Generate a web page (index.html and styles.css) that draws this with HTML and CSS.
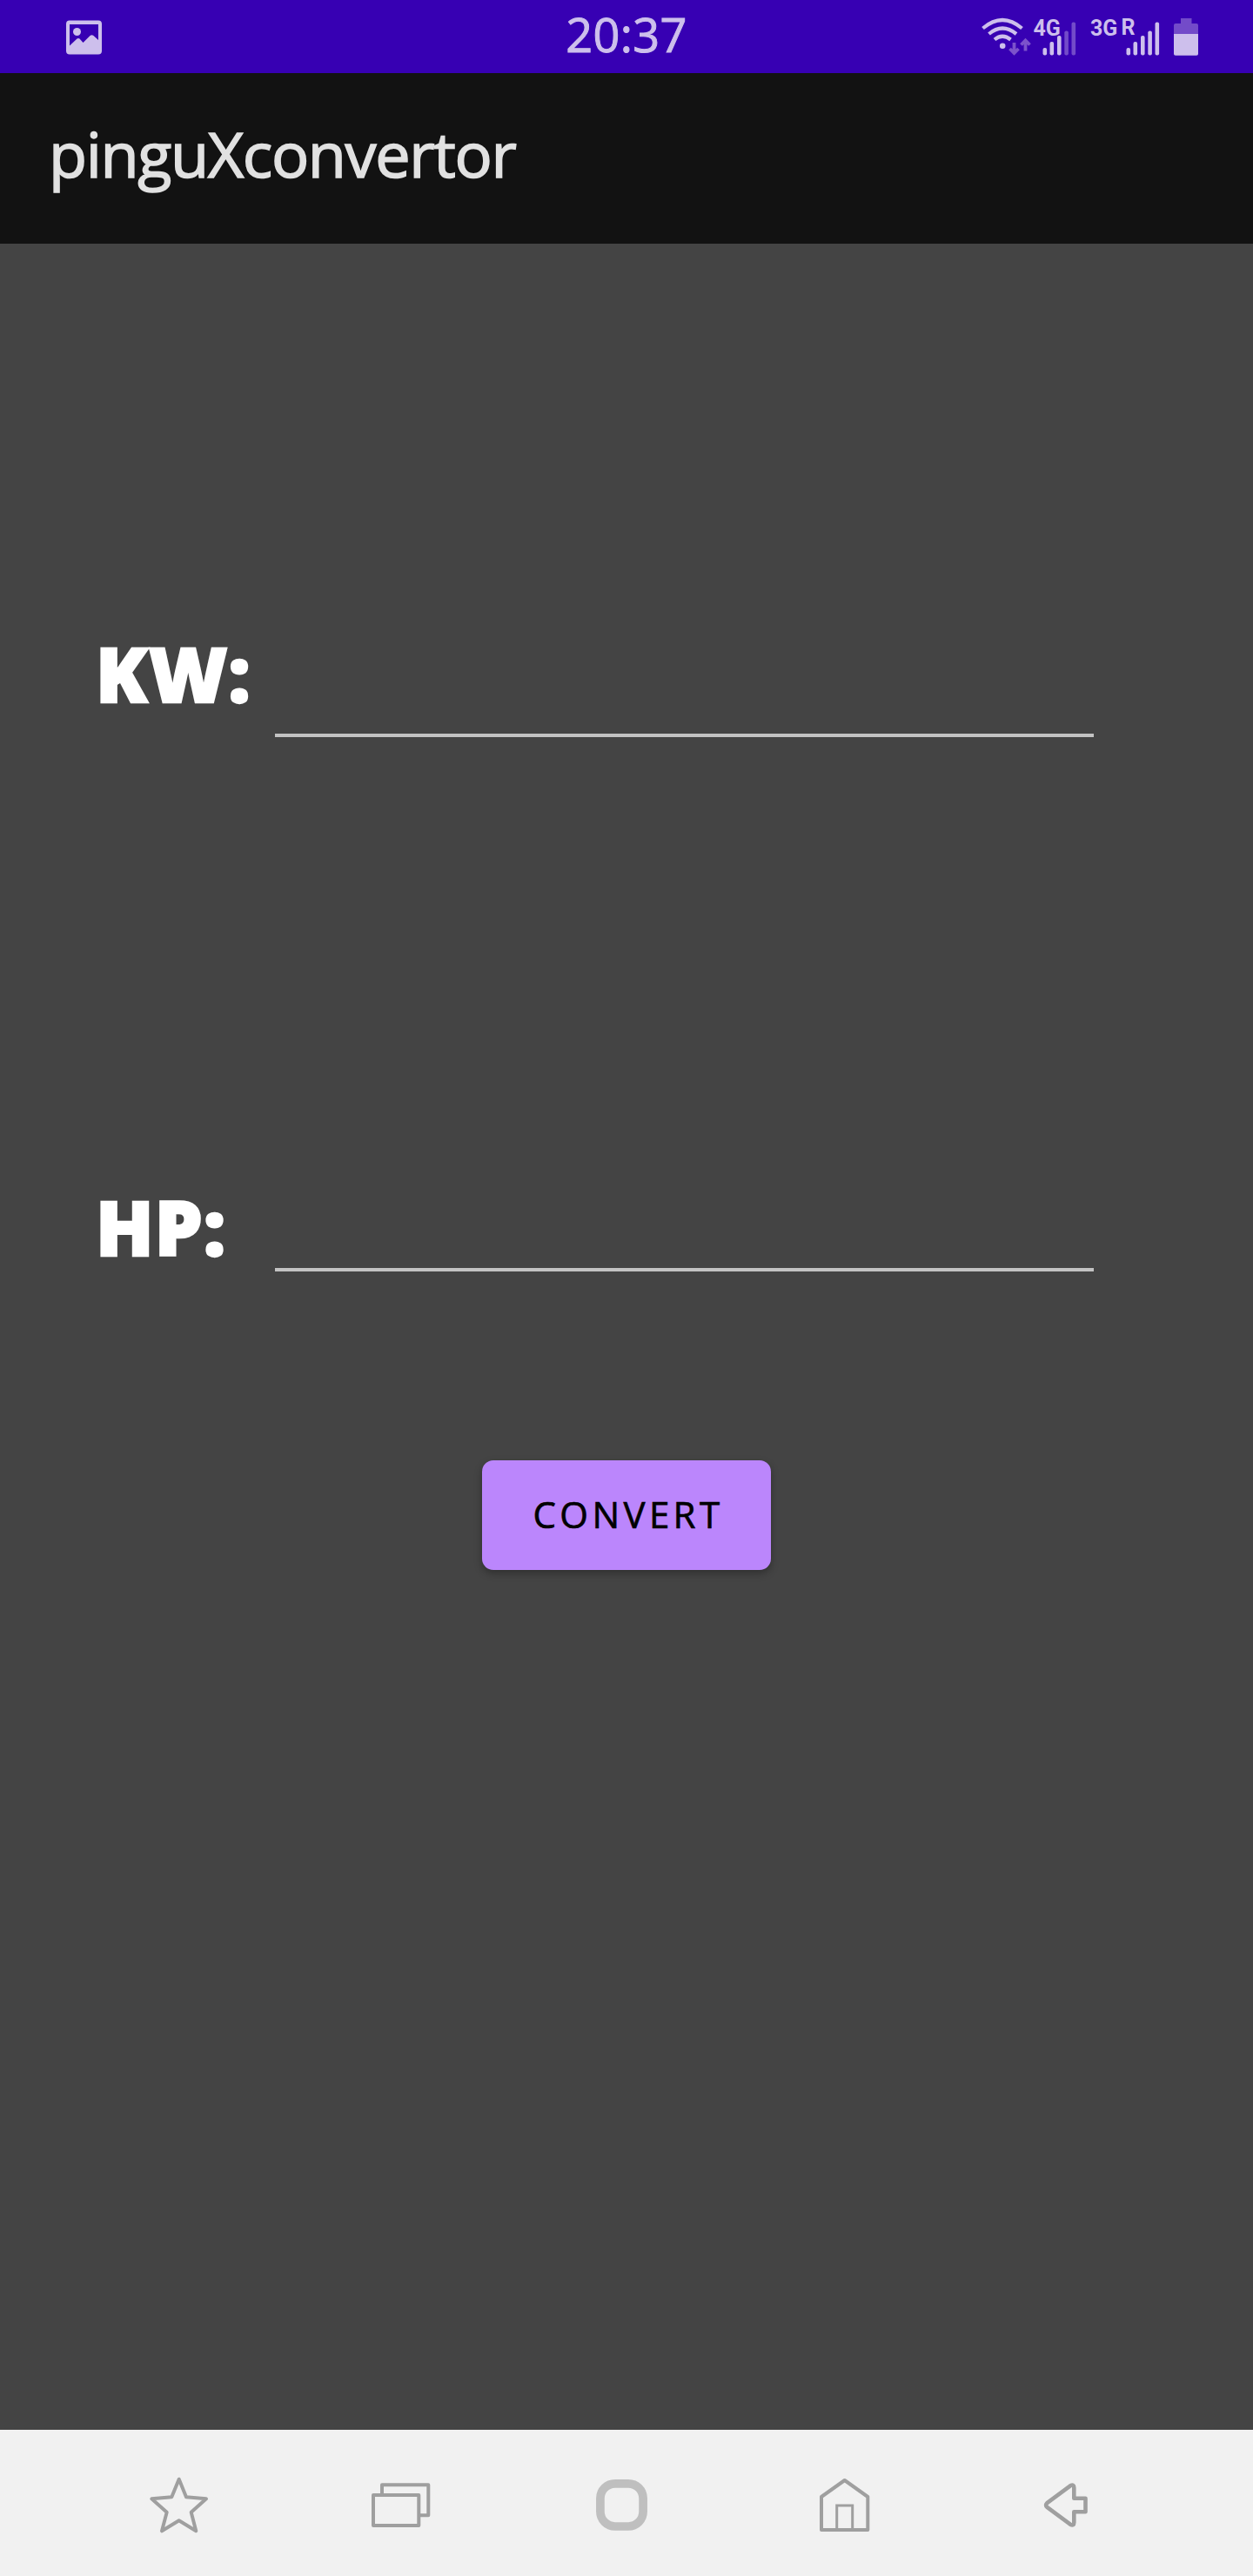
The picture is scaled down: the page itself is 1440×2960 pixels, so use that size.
FILE: index.html
```html
<!DOCTYPE html>
<html lang="en">
<head>
<meta charset="utf-8">
<title>pinguXconvertor</title>
<link rel="stylesheet" href="styles.css">
</head>
<body>
<div class="screen">
  <header class="status">
    <svg class="status-image" viewBox="0 0 42 40" aria-hidden="true">
      <path fill-rule="evenodd" d="M4 .5h33a4 4 0 0 1 4 4v31a4 4 0 0 1-4 4H4a4 4 0 0 1-4-4v-31a4 4 0 0 1 4-4zM4 5v24.500l8.500-8q1.500-1 3 0l4 4.500 8-8q2-1.600 4 0l5.500 5V5z"/>
      <circle cx="12.500" cy="13.500" r="4.500"/>
    </svg>
    <time class="clock">20:37</time>
    <svg class="status-signals" viewBox="0 0 330 84" aria-hidden="true">
      <g class="wave">
        <path d="M19.500 32.500Q42 13.500 64.500 32.500"/>
        <path d="M26.500 39Q42 26 58 39"/>
        <path d="M33 45.500Q42 38 51.500 45.500"/>
      </g>
      <circle cx="42.200" cy="52.700" r="3.300"/>
      <g class="traffic">
        <path d="M55.500 49v12M50.500 56l5 5 5-5"/>
        <path d="M68.500 58.500v-12M63.500 51.500l5-5 5 5"/>
      </g>
      <text x="77.500" y="41.300">4G</text>
      <g>
        <rect x="88.500" y="55" width="4.600" height="8.500" rx="2"/>
        <rect x="96.500" y="48" width="4.600" height="15.500" rx="2"/>
        <rect x="105" y="41" width="4.600" height="22.500" rx="2"/>
        <rect class="faint" x="113.300" y="35.500" width="4.600" height="28" rx="2"/>
        <rect class="faint" x="121.500" y="25.500" width="4.600" height="38" rx="2"/>
      </g>
      <text x="143" y="41.300">3G</text>
      <text x="178.500" y="39.500">R</text>
      <g>
        <rect x="184.500" y="55" width="4.600" height="8.500" rx="2"/>
        <rect x="192.500" y="48" width="4.600" height="15.500" rx="2"/>
        <rect x="201" y="41" width="4.600" height="22.500" rx="2"/>
        <rect x="209.300" y="35.500" width="4.600" height="28" rx="2"/>
        <rect x="217.500" y="25.500" width="4.600" height="38" rx="2"/>
      </g>
      <path class="faint" d="M247 21h12.500v6h5.500q2 0 2 2v10h-28V29q0-2 2-2h6z"/>
      <path d="M239 39h28v23q0 1.700-2 1.700h-24q-2 0-2-1.700z"/>
    </svg>
  </header>

  <div class="appbar"><h1 class="title">pinguXconvertor</h1></div>

  <main class="content">
    <label class="field field-kw"><span class="label">KW:</span><input class="input" type="text"></label>
    <label class="field field-hp"><span class="label">HP:</span><input class="input" type="text"></label>
    <button class="convert" type="button">CONVERT</button>
  </main>

  <nav class="nav">
    <a class="nav-item"><svg viewBox="0 0 81 80"><path d="M40.700 12.700L49 33.300 72 35.300 54.700 50.700 60.300 72.300 40.700 60.300 21 72.300 26.700 50.700 9.300 35.300 32.300 33.300z"/></svg></a>
    <a class="nav-item"><svg viewBox="0 0 81 80"><path d="M9 31H61.300V66H9zM19 31V19.300H72.300V54.300H61.300"/></svg></a>
    <a class="nav-item"><svg viewBox="0 0 81 80"><rect class="ring" x="14.900" y="17.800" width="49.200" height="49.200" rx="17"/></svg></a>
    <a class="nav-item"><svg viewBox="0 0 81 80"><path d="M14 71V33L40.700 14 67.300 33V71z"/><path class="door" d="M31.700 71V43H49.700V71"/></svg></a>
    <a class="nav-item"><svg viewBox="0 0 81 80"><path class="back" d="M18.300 40.200L45 20.300Q49.300 18 49.300 22.500V34.700H62.500V50.300H49.300V62.500Q49.300 67 45 64.700L18.300 44.800Q15.800 42.500 18.300 40.200z"/></svg></a>
  </nav>
</div>
</body>
</html>
```
FILE: styles.css
```css
* { box-sizing: border-box; }

body {
  margin: 0;
  font-family: "Open Sans", "Noto Sans", sans-serif;
}

.screen {
  width: 1440px;
  height: 2960px;
  display: flex;
  flex-direction: column;
  background: #444;
}

.status {
  flex: none;
  height: 84px;
  display: grid;
  grid-template-columns: 330px 1fr 330px;
  align-items: center;
  background: #3700b3;
  color: #cdbfec;
  fill: #cdbfec;
}

.status-image {
  width: 42px;
  height: 40px;
  margin: 2px 0 0 76px;
}

.clock {
  height: 84px;
  text-align: center;
  font-size: 54px;
  line-height: 79px;
  letter-spacing: .4px;
  -webkit-text-stroke: 1px #cdbfec;
}

.status-signals {
  width: 330px;
  height: 84px;
  font: 700 25px Roboto, sans-serif;
}

.wave { fill: none; stroke: #cdbfec; stroke-width: 4.2; }
.traffic { fill: none; stroke: #7c52cb; stroke-width: 3.8; }
.faint { fill: #734bc9; }

.appbar {
  flex: none;
  height: 196px;
  padding: 0 0 12px 56px;
  display: flex;
  align-items: center;
  background: #121212;
}

.title {
  margin: 0;
  color: #e1e1e1;
  font-size: 72px;
  line-height: 96px;
  font-weight: 400;
  letter-spacing: -1.4px;
  -webkit-text-stroke: 1.5px #e1e1e1;
}

.content {
  flex: 1;
  display: flex;
  flex-direction: column;
  align-items: flex-start;
}

.field {
  display: flex;
  align-items: flex-start;
  padding-left: 110px;
}

.field-kw { margin-top: 433px; }
.field-hp { margin-top: 502px; }

.label {
  width: 206px;
  color: #fff;
  font-size: 87px;
  line-height: 120px;
  font-weight: 800;
  letter-spacing: 1.2px;
  white-space: nowrap;
  -webkit-text-stroke: 2.5px #fff;
}

.input {
  width: 941px;
  height: 134px;
  padding: 0 0 12px;
  border: 0;
  border-bottom: 4px solid #c3c3c3;
  outline: 0;
  background: transparent;
  color: #fff;
  font: 64px "Open Sans", sans-serif;
}

.field-hp .input { height: 112px; }

.convert {
  align-self: center;
  width: 332px;
  height: 126px;
  margin-top: 209px;
  padding: 0 0 2px 4px;
  border: 0;
  border-radius: 13px;
  background: #bb86fc;
  box-shadow: 0 4px 10px rgba(0, 0, 0, .3);
  color: #000;
  font: 400 42px/124px "Open Sans", sans-serif;
  letter-spacing: 4.4px;
  -webkit-text-stroke: .7px #000;
}

.nav {
  flex: none;
  height: 168px;
  padding-left: 78px;
  display: flex;
  background: #f1f1f1;
}

.nav-item {
  width: 255px;
  display: flex;
  align-items: center;
  justify-content: center;
}

.nav-item svg {
  width: 81px;
  height: 80px;
  fill: none;
  stroke: #9f9f9f;
  stroke-width: 4;
  stroke-linejoin: round;
}

.nav-item .ring { stroke: #bfbfbf; stroke-width: 9.7; }
.nav-item .door { stroke-width: 3; stroke-linejoin: miter; }
.nav-item .back { stroke-width: 4.6; }
```
